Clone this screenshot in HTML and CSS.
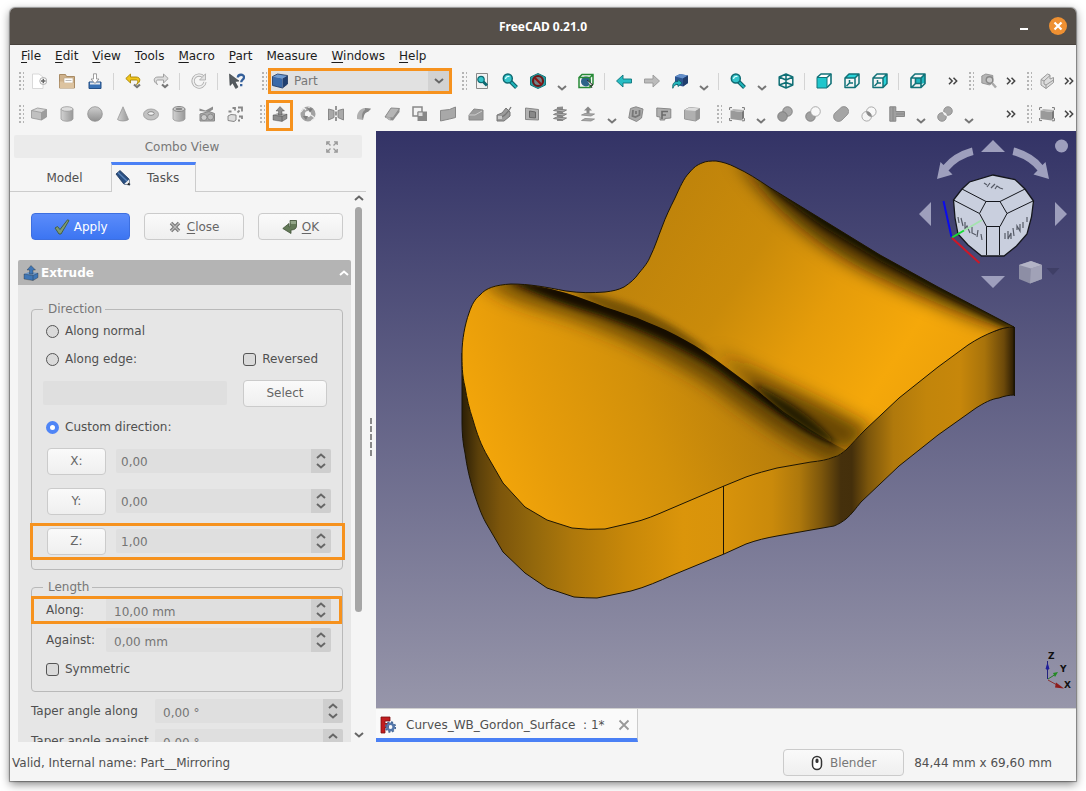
FILE: index.html
```html
<!DOCTYPE html>
<html lang="en">
<head>
    <meta charset="UTF-8">
    <meta name="viewport" content="width=device-width, initial-scale=1.0">
    <title>FreeCAD 0.21.0</title>
    <link rel="stylesheet" href="styles.css">
</head>
<body>
    <!-- shared icon shapes -->
    <svg class="defs" width="0" height="0" aria-hidden="true">
        <defs>
            <linearGradient id="g" x1="0" y1="0" x2="0" y2="1">
                <stop offset="0" stop-color="#cfcfcf"/><stop offset="1" stop-color="#8f8f8f"/>
            </linearGradient>
            <linearGradient id="gh" x1="0" y1="0" x2="1" y2="0">
                <stop offset="0" stop-color="#d2d2d2"/><stop offset="1" stop-color="#989898"/>
            </linearGradient>
        </defs>
        <symbol id="chev" viewBox="0 0 10 6"><path d="M1 1l4 3.400L9 1" fill="none" stroke="currentColor" stroke-width="2"/></symbol>
        <symbol id="ext" viewBox="0 0 10 8"><path d="M1 .7L4.200 4 1 7.300M5.500.7L8.700 4 5.500 7.300" fill="none" stroke="#444" stroke-width="1.500"/></symbol>
        <symbol id="mag" viewBox="0 0 16 16">
            <path d="M8.500 8.500l6 6" stroke="#0c6068" stroke-width="4"/><path d="M8.500 8.500l5.700 5.700" stroke="#21b5bb" stroke-width="2"/>
            <circle cx="5.800" cy="5.500" r="4.500" fill="#35c4ca" stroke="#0e6a72" stroke-width="1.500"/><path d="M3.500 6a3 3 0 0 1 4-2.500" stroke="#d8ffff" fill="none" stroke-width="1.300"/>
        </symbol>
        <symbol id="wire" viewBox="0 0 16 16">
            <path d="M1.200 4L8 1l6.800 3v8L8 15l-6.800-3zM1.200 4L8 7l6.800-3M8 7v8M8 1v6M1.200 12L8 9.500l6.800 2.500" fill="none" stroke="#0f6f75" stroke-width="1.500" stroke-linejoin="round"/>
        </symbol>
        <symbol id="box" viewBox="0 0 16 16">
            <path d="M.5 4.500l6-2.500 9 1.500-5 3z" fill="#d6d6d6"/><path d="M.5 4.500l10 2V14l-10-2z" fill="#c0c0c0"/><path d="M10.500 6.500l5-3V11l-5 3z" fill="#9d9d9d"/>
            <path d="M.5 4.500l6-2.500 9 1.500V11l-5 3-10-2zM.5 4.500l10 2V14M10.500 6.500l5-3" fill="none" stroke="#949494" stroke-width=".8"/>
        </symbol>
        <symbol id="bluebox" viewBox="0 0 16 16">
            <path d="M.5 3.500l5-2.500 10 1.500-5 3z" fill="#6d9bd3"/><path d="M.5 3.500l10 2V15L.5 12.500z" fill="#3a69a8"/><path d="M10.500 5.500l5-3V11l-5 4z" fill="#203f70"/>
            <path d="M.5 3.500l5-2.500 10 1.500V11l-5 4-10-2.500z" fill="none" stroke="#1c3560" stroke-width=".8"/>
        </symbol>
        <symbol id="frame" viewBox="0 0 16 16">
            <path d="M1.500 4.500l11 1.500v8.500L1.500 13z" fill="#9a9a9a"/><path d="M12.500 6L15 4v8l-2.500 2.500z" fill="#777"/><path d="M1.500 4.500L4.500 3l10.500 1-2.500 2z" fill="#b5b5b5"/>
            <path d="M.6 4V1.600H3M13 1.600h2.400V4M.6 12v2.600H3M13 14.800h2.400v-2.600" fill="none" stroke="#777"/>
        </symbol>
        <symbol id="extrude" viewBox="0 0 16 16">
            <path d="M1 9l5-2 9 1v4.500L10 15.500 1 14z" fill="currentColor"/><path d="M1 9l5-2 9 1-5 2.500z" fill="#fff" fill-opacity=".25"/>
            <path d="M1 9l9 1.500L15 8M10 10.500v5M1 9v5l9 1.500 5-3V8" fill="none" stroke="#222" stroke-opacity=".4" stroke-width=".8"/>
            <path d="M8 .5L12.500 5H10v4H6.500V5H4z" fill="currentColor" stroke="#222" stroke-opacity=".45" stroke-width=".7"/>
        </symbol>
    </svg>

    <div class="window">
        <header class="titlebar">
            <h1 class="title">FreeCAD 0.21.0</h1>
            <div class="window-buttons">
                <button class="minimize" aria-label="Minimize"></button>
                <button class="close-window" aria-label="Close window">
                    <svg width="10" height="10" viewBox="0 0 10 10"><path d="M1.500 1.500l7 7M8.500 1.500l-7 7" stroke="#fff" stroke-width="2.200"/></svg>
                </button>
            </div>
        </header>

        <nav class="menubar">
            <button><u>F</u>ile</button>
            <button><u>E</u>dit</button>
            <button><u>V</u>iew</button>
            <button><u>T</u>ools</button>
            <button><u>M</u>acro</button>
            <button><u>P</u>art</button>
            <button>Measure</button>
            <button><u>W</u>indows</button>
            <button><u>H</u>elp</button>
        </nav>

        <div class="toolbar-row">
            <div class="toolbar">
                <span class="grip"></span>
                <button class="tool" aria-label="New"><svg viewBox="0 0 16 16"><path d="M1.500 1H8l4 3v11.500H1.500z" fill="#fff" stroke="#d0d0d0" stroke-width=".8"/><circle cx="12.300" cy="8" r="3.500" fill="#fff" stroke="#999" stroke-width=".8"/><path d="M12.300 5.700v4.600M10 8h4.600" stroke="#666" stroke-width="1.500"/></svg></button>
                <button class="tool" aria-label="Open"><svg viewBox="0 0 16 16"><path d="M.5 1.500h6l1 2h8v11.500H.5z" fill="#cfb28c" stroke="#a98b64"/><path d="M5 5h9v5H5z" fill="#fff" stroke="#bba27f" stroke-width=".6"/><path d="M6.500 7.500h6" stroke="#bbb"/><path d="M.8 8.500h3.700V10H15v5H.8z" fill="#dcc3a0"/></svg></button>
                <button class="tool" aria-label="Save"><svg viewBox="0 0 16 16"><path d="M2 9h12v6.500H2z" fill="#3972b5" stroke="#244f85"/><path d="M3 9.500h10v2H3z" fill="#e4e9ef"/><path d="M6.500.8h3V6H12l-4 4.500L4 6h2.500z" fill="#fff" stroke="#888" stroke-width=".8"/></svg></button>
                <span class="sep"></span>
                <button class="tool" aria-label="Undo"><svg viewBox="0 0 16 16"><path d="M5.500 1L.8 5.500 5.500 10V7H11c2 0 2.500 2 .5 4.500C16 9 16 4 11 4H5.500z" fill="#f1c51b" stroke="#a58205" stroke-width=".9"/><path d="M9 11.500l3 2.500 3-2.500" fill="none" stroke="#777" stroke-width="2.200"/></svg></button>
                <button class="tool" aria-label="Redo"><svg viewBox="0 0 16 16"><path d="M10.500 1l4.700 4.500-4.700 4.500V7H5C3 7 2.500 9 4.500 11.500 0 9 0 4 5 4h5.500z" fill="#ddd" stroke="#999" stroke-width=".9"/><path d="M9 11.500l3 2.500 3-2.500" fill="none" stroke="#777" stroke-width="2.200"/></svg></button>
                <span class="sep"></span>
                <button class="tool" aria-label="Refresh"><svg viewBox="0 0 16 16"><path d="M12.500 4A6 6 0 1 0 14 9" fill="none" stroke="#aaa" stroke-width="3.200"/><path d="M12.500 4A6 6 0 1 0 14 9" fill="none" stroke="#eee" stroke-width="1.600"/><path d="M14.500.8V7H8.500z" fill="#e2e2e2" stroke="#aaa" stroke-width=".8"/></svg></button>
                <span class="sep"></span>
                <button class="tool" aria-label="What's this?"><svg viewBox="0 0 16 16"><path d="M.5 1l9.500 7-4 .6 3 5.500-2.300 1.400-3-5.500L1 12.500z" fill="#555b60" stroke="#3b3f42" stroke-width=".6"/><path d="M8.800 4.500C9 1 15 .8 15 4.200c0 2.500-2.800 2.300-2.800 5M12.200 11v2.300" fill="none" stroke="#35609b" stroke-width="2.300"/></svg></button>
            </div>
            <div class="toolbar">
                <span class="grip"></span>
                <div class="workbench">
                    <svg class="workbench-icon" viewBox="0 0 16 16"><use href="#bluebox"/></svg>
                    <select aria-label="Workbench"><option>Part</option></select>
                    <span class="workbench-arrow"><svg width="10" height="6"><use href="#chev"/></svg></span>
                </div>
            </div>
            <div class="toolbar wide">
                <span class="grip"></span>
                <button class="tool" aria-label="Fit all"><svg viewBox="0 0 16 16"><path d="M2.500.5h11v15h-11z" fill="#f2f2f2" stroke="#888"/><path d="M8.500 8l4.500 4.500" stroke="#0e6a72" stroke-width="3"/><circle cx="7" cy="6.500" r="3.200" fill="#35c4ca" stroke="#0e6a72" stroke-width="1.200"/></svg></button>
                <button class="tool" aria-label="Fit selection"><svg viewBox="0 0 16 16"><use href="#mag"/></svg></button>
                <button class="tool" aria-label="Draw style"><svg viewBox="0 0 16 16"><path d="M.5 4L8 .5 15.500 4v8L8 15.500.5 12z" fill="#2a9ba0" stroke="#14777c"/><circle cx="8" cy="8" r="5" fill="#708488" stroke="#6e1717" stroke-width="2.200"/><path d="M4.500 4.500l7 7" stroke="#8c1717" stroke-width="2.200"/></svg></button>
                <button class="drop" aria-label="More styles"><svg width="10" height="6"><use href="#chev"/></svg></button>
                <button class="tool" aria-label="Bounding box"><svg viewBox="0 0 16 16"><circle cx="8" cy="8.500" r="5" fill="#2d6389"/><path d="M1 4.500l3-3h11v9.500l-3 3.500H1zM1 4.500h11v10M12 4.500l3-3" fill="none" stroke="#278a37" stroke-width="1.500"/><path d="M9 7l6 5-2.500.3 1.500 2.700" fill="#eee" stroke="#222" stroke-width=".9"/></svg></button>
                <span class="sep"></span>
                <button class="tool" aria-label="Back"><svg viewBox="0 0 16 16"><path d="M7 2v4h8.500v4H7v4L.5 8z" fill="#27bdc4" stroke="#0e757b" stroke-width=".9"/></svg></button>
                <button class="tool" aria-label="Forward"><svg viewBox="0 0 16 16"><path d="M9 2v4H.5v4H9v4l6.500-6z" fill="#bbb" stroke="#999" stroke-width=".9"/></svg></button>
                <button class="tool" aria-label="Linked object"><svg viewBox="0 0 16 16"><path d="M3 3.500L8 1l8 1.500V10l-5 3.500-8-2z" fill="#2c5490"/><path d="M3 3.500L8 1l8 1.500-5 3z" fill="#638fca"/><path d="M11 5.500l5-3V10l-5 3.500z" fill="#203e6d"/><path d="M.8 15.300C0 10 3 8 6 8.500V6.500L10 10l-4 3.500v-2c-2.500-.5-4 1-5.200 3.800z" fill="#24b5bc" stroke="#0d5e65" stroke-width=".8"/></svg></button>
                <button class="drop" aria-label="More links"><svg width="10" height="6"><use href="#chev"/></svg></button>
                <span class="sep"></span>
                <button class="tool" aria-label="Zoom"><svg viewBox="0 0 16 16"><use href="#mag"/></svg></button>
                <button class="drop" aria-label="More zoom"><svg width="10" height="6"><use href="#chev"/></svg></button>
                <button class="tool" aria-label="Isometric"><svg viewBox="0 0 16 16"><use href="#wire"/></svg></button>
                <span class="sep"></span>
                <button class="tool" aria-label="Front"><svg viewBox="0 0 16 16"><path d="M1 4.500L5 1h10v9.500l-4 4" fill="#fff" stroke="#127278" stroke-width="1.600" stroke-linejoin="round"/><path d="M1 4.500h10v10.500H1z" fill="#20c6cc" stroke="#127278" stroke-linejoin="round"/><path d="M11 4.500L15 1" stroke="#127278" stroke-width="1.600"/></svg></button>
                <button class="tool" aria-label="Top"><svg viewBox="0 0 16 16"><path d="M1 5l4-4h10l-4 4z" fill="#29d3d9"/><path d="M1 5l4-4h10v9.500l-4 4H1zM1 5h10v9.500M11 5l4-4M5.500 7v3l-3 3M6 10h3" fill="none" stroke="#127278" stroke-width="1.500" stroke-linejoin="round"/></svg></button>
                <button class="tool" aria-label="Right"><svg viewBox="0 0 16 16"><path d="M11 5l4-4v9.500l-4 4z" fill="#29d3d9"/><path d="M1 5l4-4h10v9.500l-4 4H1zM1 5h10v9.500M11 5l4-4M5.500 7v3l-3 3M6 10h3" fill="none" stroke="#127278" stroke-width="1.500" stroke-linejoin="round"/></svg></button>
                <span class="sep"></span>
                <button class="tool" aria-label="Rear"><svg viewBox="0 0 16 16"><path d="M5 5h6v6H5zM11 5l4-4v9l-4 1z" fill="#1fb6bd"/><path d="M1 5l4-4h10v9.500l-4 4H1zM1 5h10v9.500M11 5l4-4M5.500 5v5.500l-4 4M5.500 10.500H11" fill="none" stroke="#127278" stroke-width="1.600" stroke-linejoin="round"/></svg></button>
                <button class="ext last" aria-label="More"><svg width="10" height="8"><use href="#ext"/></svg></button>
            </div>
            <div class="toolbar">
                <span class="grip"></span>
                <button class="tool" aria-label="Measure"><svg viewBox="0 0 16 16"><path d="M.8 3l4-2 7 1.500V9l-3 3-8-2z" fill="#b5b5b5" stroke="#888" stroke-width=".8"/><circle cx="8.500" cy="7" r="3.300" fill="#ccc" stroke="#888" stroke-width="1.400"/><path d="M11 10l4 4.500" stroke="#aaa" stroke-width="2.500"/></svg></button>
                <button class="ext" aria-label="More"><svg width="10" height="8"><use href="#ext"/></svg></button>
            </div>
            <div class="toolbar">
                <span class="grip"></span>
                <button class="tool" aria-label="Part design"><svg viewBox="0 0 16 16"><path d="M2 6.500L8.500 1 11 2v4l3.500-1.500v5L7 15.500 2 12z" fill="#ddd" stroke="#999"/><path d="M2 6.500L5 8v3l2 1v3.500M5 8l6-5.500M7 12l7.500-5" fill="none" stroke="#999"/></svg></button>
                <button class="ext" aria-label="More"><svg width="10" height="8"><use href="#ext"/></svg></button>
            </div>
        </div>

        <div class="toolbar-row second">
            <div class="toolbar">
                <span class="grip"></span>
                <button class="tool" aria-label="Box"><svg viewBox="0 0 16 16"><use href="#box"/></svg></button>
                <button class="tool" aria-label="Cylinder"><svg viewBox="0 0 16 16"><path d="M2 3v10c1.500 3 10.500 3 12 0V3z" fill="url(#gh)" stroke="#999" stroke-width=".8"/><ellipse cx="8" cy="3" rx="6" ry="2.300" fill="#ddd" stroke="#999" stroke-width=".8"/></svg></button>
                <button class="tool" aria-label="Sphere"><svg viewBox="0 0 16 16"><circle cx="8" cy="8" r="7.300" fill="url(#g)" stroke="#909090" stroke-width=".8"/></svg></button>
                <button class="tool" aria-label="Cone"><svg viewBox="0 0 16 16"><path d="M8 .8L2.500 13.500c2 2 9 2 11 0z" fill="url(#gh)" stroke="#999" stroke-width=".8"/></svg></button>
                <button class="tool" aria-label="Torus"><svg viewBox="0 0 16 16"><ellipse cx="8" cy="8.500" rx="7.500" ry="5.500" fill="#c2c2c2" stroke="#999" stroke-width=".8"/><ellipse cx="8" cy="7.500" rx="3.200" ry="1.800" fill="#f1f1f1" stroke="#888"/></svg></button>
                <button class="tool" aria-label="Tube"><svg viewBox="0 0 16 16"><path d="M2 3v10c1.500 3 10.500 3 12 0V3z" fill="url(#gh)" stroke="#999" stroke-width=".8"/><ellipse cx="8" cy="3" rx="6" ry="2.500" fill="#ccc" stroke="#888"/><ellipse cx="8" cy="3" rx="3.300" ry="1.200" fill="#888"/></svg></button>
                <button class="tool" aria-label="Primitives"><svg viewBox="0 0 16 16"><path d="M1 8l9-2.500 5.500 2v7.500H1z" fill="#aaa" stroke="#888"/><path d="M.5 2.500l6 2L14 .5v3L10 6 .5 5z" fill="#8d8d8d"/><circle cx="5" cy="11.500" r="3" fill="#ccc" stroke="#888"/><circle cx="11.500" cy="11" r="3" fill="#bbb" stroke="#888"/></svg></button>
                <button class="tool" aria-label="Shape builder"><svg viewBox="0 0 16 16"><path d="M1 10l3-1.500 5 .5v5l-2 1.500-6-1z" fill="#ddd" stroke="#888"/><path d="M11 1.500h4v4M10.500 6.500l2-2M5.500 2h2.500v2.500M1.500 5.500h3M12 10.500h3v2.500M11 14.500h2" fill="none" stroke="#888" stroke-width="1.800"/></svg></button>
            </div>
            <div class="toolbar">
                <span class="grip"></span>
                <button class="tool marked" aria-label="Extrude"><svg viewBox="0 0 16 16" color="#8c8c8c"><use href="#extrude"/></svg></button>
                <button class="tool" aria-label="Revolve"><svg viewBox="0 0 16 16"><circle cx="8" cy="8" r="5.300" fill="none" stroke="#a2a2a2" stroke-width="4.500"/><path d="M1 6l3-4 2 2M9 1v5M11 9l4 3-4 3" stroke="#eee" stroke-width="1.200" fill="none"/><path d="M7 2l6 .5-3 4zM3 10h5l-2 4z" fill="#7d7d7d"/></svg></button>
                <button class="tool" aria-label="Mirror"><svg viewBox="0 0 16 16"><path d="M.5 3L6 4.500v7L.5 14zM15.500 3L10 4.500v7l5.500 2.500z" fill="#a9a9a9" stroke="#888"/><path d="M8 0v16" stroke="#777" stroke-width="1.500" stroke-dasharray="4 1.500"/></svg></button>
                <button class="tool" aria-label="Fillet"><svg viewBox="0 0 16 16"><path d="M1 10C2 5 5 2.500 9 2l6 .8-3 3C9 6.500 7.500 8 7 14l-6-1z" fill="#b0b0b0"/><path d="M9 2l6 .8-3 3C9.500 6.300 8 8 7 14l-1-3C6 7 7 5 9 4z" fill="#888"/></svg></button>
                <button class="tool" aria-label="Chamfer"><svg viewBox="0 0 16 16"><path d="M1 11l6-9 8.500.5L9 12z" fill="#b5b5b5" stroke="#8a8a8a"/><path d="M1 11l8 1 6.500-9.500V6L9 14.500l-4-.5z" fill="#8d8d8d"/><path d="M1.500 11l5 .5V15z" fill="#b5b5b5"/></svg></button>
                <button class="tool" aria-label="Make face"><svg viewBox="0 0 16 16"><path d="M1 1h9v9H1z" fill="#f3f3f3" stroke="#888" stroke-width="1.500"/><path d="M5.500 5.500H15V15H5.500z" fill="#888"/><path d="M6 6h5v4.500H6z" fill="#ddd" stroke="#888"/></svg></button>
                <button class="tool" aria-label="Ruled surface"><svg viewBox="0 0 16 16"><path d="M.5 4.500l9-1 6-2.500v10.500l-6 1.500-9 2z" fill="#a8a8a8" stroke="#888"/></svg></button>
                <button class="tool" aria-label="Loft"><svg viewBox="0 0 16 16"><path d="M1 9l5-6 9 1v10H1z" fill="#9b9b9b" stroke="#888"/><path d="M1 9h6l7-4" fill="none" stroke="#ccc"/></svg></button>
                <button class="tool" aria-label="Sweep"><svg viewBox="0 0 16 16"><path d="M1 9l5-2 4-5 4 4v4l-6 5H1z" fill="#9b9b9b" stroke="#777"/><path d="M4 11c4 0 7-3 11-10" fill="none" stroke="#777" stroke-width="1.300"/><path d="M2 10h4v3H2z" fill="#ccc"/></svg></button>
                <button class="tool" aria-label="Section"><svg viewBox="0 0 16 16"><path d="M1.500 2l13 1.500V14l-13-.5z" fill="#b2b2b2" stroke="#888"/><path d="M5.500 5l6 1v6l-6-.5z" fill="#888" stroke="#666"/></svg></button>
                <button class="tool" aria-label="Cross sections"><svg viewBox="0 0 16 16"><path d="M5 1l6-.5V15H5z" fill="#8d8d8d"/><path d="M1.500 4.500L5 3l9.500 1-3.500 2zM1.500 8.500L5 7l9.500 1-3.500 2zM1.500 12.500L5 11l9.500 1-3.500 2z" fill="#b0b0b0" stroke="#777" stroke-width=".9"/></svg></button>
                <button class="tool" aria-label="Offset"><svg viewBox="0 0 16 16"><path d="M8 .5l4 4H9.500v3h-3v-3H4z" fill="#888"/><path d="M1.500 9L5 7.500l9.500.5-3.500 2zM1.500 14.500L5 12.500l9.500.5-3.500 2z" fill="#aaa" stroke="#888" stroke-width=".8"/></svg></button>
                <button class="drop" aria-label="More offsets"><svg width="10" height="6"><use href="#chev"/></svg></button>
                <button class="tool" aria-label="Thickness"><svg viewBox="0 0 16 16"><path d="M2.500 2.500L8 .8l7 2.200-1.500 9-5 3.500L.8 12z" fill="#a9a9a9" stroke="#888"/><path d="M5 4l-.5 6 3 1 4-2V4M8 5v3" fill="none" stroke="#777" stroke-width="1.800"/></svg></button>
                <button class="tool" aria-label="Projection"><svg viewBox="0 0 16 16"><path d="M.8 2l14 1v9l-6 .5V14H4v-3L.8 10.500z" fill="#b0b0b0" stroke="#888"/><path d="M6 13V5.500h6M6 9h4" fill="none" stroke="#6c6c6c" stroke-width="1.600"/></svg></button>
                <button class="tool" aria-label="Color per face"><svg viewBox="0 0 16 16"><path d="M.5 4l5-2.500 10 1v10l-4 2.500-11-2z" fill="#b0b0b0" stroke="#999"/><path d="M.5 4l5-2.500 10 1-4 2.500z" fill="#ddd"/><path d="M11.500 5l4-2.500v10l-4 2.500z" fill="#959595"/></svg></button>
            </div>
            <div class="toolbar wide">
                <span class="grip"></span>
                <button class="tool" aria-label="Compound"><svg viewBox="0 0 16 16"><use href="#frame"/></svg></button>
                <button class="drop" aria-label="More compounds"><svg width="10" height="6"><use href="#chev"/></svg></button>
                <button class="tool" aria-label="Boolean"><svg viewBox="0 0 16 16"><circle cx="10.500" cy="5.500" r="4.800" fill="#a8a8a8" stroke="#777" stroke-width=".8"/><circle cx="5.500" cy="10.500" r="4.800" fill="#999" stroke="#777" stroke-width=".8"/></svg></button>
                <button class="tool" aria-label="Cut"><svg viewBox="0 0 16 16"><circle cx="5.500" cy="10.500" r="4.800" fill="#a0a0a0" stroke="#777" stroke-width=".8"/><circle cx="10.500" cy="5.500" r="4.800" fill="#f8f8f8" stroke="#999" stroke-width=".8"/></svg></button>
                <button class="tool" aria-label="Union"><svg viewBox="0 0 16 16"><path d="M7 2.500a4.800 4.800 0 1 1 7 6.500l-5 5a4.800 4.800 0 1 1-7-7z" fill="#a5a5a5" stroke="#888" stroke-width=".8"/></svg></button>
                <button class="tool" aria-label="Intersection"><svg viewBox="0 0 16 16"><circle cx="10.300" cy="5.700" r="4.800" fill="#f8f8f8" stroke="#999" stroke-width=".8"/><circle cx="5.700" cy="10.300" r="4.800" fill="none" stroke="#999" stroke-width=".8"/><path d="M5.600 5.600a4.800 4.800 0 0 1 4.800 4.800 4.800 4.800 0 0 1-4.800-4.800z" fill="#888"/></svg></button>
                <button class="tool" aria-label="Join"><svg viewBox="0 0 16 16"><path d="M.8.8h6v4.700h8.700v5H6.800v4.700h-6z" fill="#a0a0a0" stroke="#888"/><path d="M4 1v14M7 8h8" stroke="#888"/></svg></button>
                <button class="drop" aria-label="More joins"><svg width="10" height="6"><use href="#chev"/></svg></button>
                <button class="tool" aria-label="Split"><svg viewBox="0 0 16 16"><circle cx="11" cy="5" r="4.300" fill="#a8a8a8" stroke="#888" stroke-width=".8"/><circle cx="5" cy="11" r="4.300" fill="#a8a8a8" stroke="#888" stroke-width=".8"/><path d="M6 6.500a4 4 0 0 1 3.500 3.500M6.500 6a4 4 0 0 0 3.500 3.500" fill="none" stroke="#f3f3f3" stroke-width="1.200"/></svg></button>
                <button class="drop" aria-label="More splits"><svg width="10" height="6"><use href="#chev"/></svg></button>
                <button class="ext last" aria-label="More"><svg width="10" height="8"><use href="#ext"/></svg></button>
            </div>
            <div class="toolbar">
                <span class="grip"></span>
                <button class="tool" aria-label="Check geometry"><svg viewBox="0 0 16 16"><use href="#frame"/></svg></button>
                <button class="ext" aria-label="More"><svg width="10" height="8"><use href="#ext"/></svg></button>
            </div>
        </div>

        <main class="main">
            <aside class="dock">
                <div class="dock-title">
                    <span>Combo View</span>
                    <button class="dock-float" aria-label="Float panel">
                        <svg width="12" height="12" viewBox="0 0 12 12"><path d="M.8 4V.8H4M.8.8l3.700 3.700M8 .8h3.200V4M11.200.8L7.500 4.500M.8 8v3.200H4M.8 11.200l3.700-3.700M8 11.200h3.200V8M11.200 11.200L7.500 7.500" fill="none" stroke="#999" stroke-width="1.300"/></svg>
                    </button>
                </div>
                <div class="tabs">
                    <button class="tab">Model</button>
                    <button class="tab active">
                        <svg width="16" height="16" viewBox="0 0 16 16"><path d="M1 4l4-3.500 9 8.500.8 6-6-1z" fill="#284e80" stroke="#1a3459" stroke-width=".8"/><path d="M3 2.500l9 8.500" stroke="#5a83b8" stroke-width="1.500"/><path d="M14 9.500l.8 5.500-5.500-1z" fill="#eee"/><path d="M14.200 12.500l.8 2.700-3-.6z" fill="#111"/></svg>
                        Tasks
                    </button>
                    <span class="tabs-rest"></span>
                </div>
                <div class="scroll">
                    <div class="tasks">
                        <div class="task-buttons">
                            <button class="btn primary"><svg width="16" height="16" viewBox="0 0 16 16"><path d="M1 9l2.500-1.500 2.500 3L13.500.8l1.500.7L7 15H5z" fill="#7e9a73" stroke="#3f5a35" stroke-width=".9"/></svg>Apply</button>
                            <button class="btn"><svg width="12" height="12" viewBox="0 0 12 12"><path d="M2 2l8 8M10 2l-8 8" stroke="#777" stroke-width="3.500"/><path d="M2 2l8 8M10 2l-8 8" stroke="#bbb" stroke-width="1.300"/></svg><span><u>C</u>lose</span></button>
                            <button class="btn ok"><svg width="16" height="16" viewBox="0 0 16 16"><path d="M8 1.500h6.500V7c0 2.500-2 4-5.500 4v3.500L.8 9.500 7 4.500V8c1 0 1.500-.5 1-6.500z" fill="#647a58" stroke="#3f5136" stroke-width=".8"/><path d="M8.500 2h5.500v3H9z" fill="#93a689"/></svg><span><u>O</u>K</span></button>
                        </div>

                        <section class="panel">
                            <h2 class="panel-title">
                                <svg width="16" height="16" color="#3f76b5"><use href="#extrude"/></svg>
                                Extrude
                                <svg class="fold" width="10" height="6"><use href="#chev"/></svg>
                            </h2>
                            <div class="panel-body">
                                <fieldset>
                                    <legend>Direction</legend>
                                    <div class="row"><label><input type="radio" name="dir">Along normal</label></div>
                                    <div class="row">
                                        <label><input type="radio" name="dir">Along edge:</label>
                                        <label class="reversed"><input type="checkbox">Reversed</label>
                                    </div>
                                    <div class="row tall edge">
                                        <input class="field" type="text" aria-label="Edge" disabled>
                                        <button class="btn">Select</button>
                                    </div>
                                    <div class="row"><label><input type="radio" name="dir" checked>Custom direction:</label></div>
                                    <div class="row tall axis">
                                        <button class="btn">X:</button>
                                        <div class="spin"><input type="text" value="0,00" aria-label="X"><span class="arrows"><button aria-label="X up"><svg width="10" height="6"><use href="#chev"/></svg></button><button aria-label="X down"><svg width="10" height="6"><use href="#chev"/></svg></button></span></div>
                                    </div>
                                    <div class="row tall axis">
                                        <button class="btn">Y:</button>
                                        <div class="spin"><input type="text" value="0,00" aria-label="Y"><span class="arrows"><button aria-label="Y up"><svg width="10" height="6"><use href="#chev"/></svg></button><button aria-label="Y down"><svg width="10" height="6"><use href="#chev"/></svg></button></span></div>
                                    </div>
                                    <div class="row tall axis marked">
                                        <button class="btn">Z:</button>
                                        <div class="spin"><input type="text" value="1,00" aria-label="Z"><span class="arrows"><button aria-label="Z up"><svg width="10" height="6"><use href="#chev"/></svg></button><button aria-label="Z down"><svg width="10" height="6"><use href="#chev"/></svg></button></span></div>
                                    </div>
                                </fieldset>
                                <fieldset class="length">
                                    <legend>Length</legend>
                                    <div class="row mid marked">
                                        <label for="along">Along:</label>
                                        <div class="spin"><input type="text" id="along" value="10,00 mm"><span class="arrows"><button aria-label="Along up"><svg width="10" height="6"><use href="#chev"/></svg></button><button aria-label="Along down"><svg width="10" height="6"><use href="#chev"/></svg></button></span></div>
                                    </div>
                                    <div class="row mid">
                                        <label for="against">Against:</label>
                                        <div class="spin"><input type="text" id="against" value="0,00 mm"><span class="arrows"><button aria-label="Against up"><svg width="10" height="6"><use href="#chev"/></svg></button><button aria-label="Against down"><svg width="10" height="6"><use href="#chev"/></svg></button></span></div>
                                    </div>
                                    <div class="row"><label><input type="checkbox">Symmetric</label></div>
                                </fieldset>
                                <div class="taper">
                                    <label for="taper1">Taper angle along</label>
                                    <div class="spin"><input type="text" id="taper1" value="0,00 °"><span class="arrows"><button aria-label="Taper along up"><svg width="10" height="6"><use href="#chev"/></svg></button><button aria-label="Taper along down"><svg width="10" height="6"><use href="#chev"/></svg></button></span></div>
                                </div>
                                <div class="taper">
                                    <label for="taper2">Taper angle against</label>
                                    <div class="spin"><input type="text" id="taper2" value="0,00 °"><span class="arrows"><button aria-label="Taper against up"><svg width="10" height="6"><use href="#chev"/></svg></button><button aria-label="Taper against down"><svg width="10" height="6"><use href="#chev"/></svg></button></span></div>
                                </div>
                            </div>
                        </section>
                    </div>
                    <div class="scrollbar">
                        <svg class="up" width="10" height="6"><use href="#chev"/></svg>
                        <div class="track"><div class="thumb"></div></div>
                        <svg width="10" height="6"><use href="#chev"/></svg>
                    </div>
                </div>
            </aside>
            <div class="splitter"><span></span></div>

            <section class="view">
                <div class="canvas">
                    <svg class="model" viewBox="376 131 700 577" preserveAspectRatio="xMidYMid slice">
                        <defs>
                            <linearGradient id="side" gradientUnits="userSpaceOnUse" x1="462" y1="0" x2="1015" y2="0">
                                <stop offset="0" stop-color="#2c1f06"/><stop offset=".03" stop-color="#5b400a"/>
                                <stop offset=".07" stop-color="#7d560b"/><stop offset=".13" stop-color="#93680c"/>
                                <stop offset=".2" stop-color="#ae780b"/><stop offset=".3" stop-color="#c88809"/>
                                <stop offset=".4" stop-color="#db950a"/><stop offset=".47" stop-color="#d8930b"/>
                                <stop offset=".56" stop-color="#ca8a0b"/><stop offset=".61" stop-color="#ae780c"/>
                                <stop offset=".65" stop-color="#7c560c"/><stop offset=".685" stop-color="#45300c"/>
                                <stop offset=".705" stop-color="#442f0b"/><stop offset=".735" stop-color="#7c560c"/>
                                <stop offset=".78" stop-color="#b0790c"/><stop offset=".84" stop-color="#c2850b"/>
                                <stop offset=".9" stop-color="#c7870b"/><stop offset=".945" stop-color="#a8730b"/>
                                <stop offset=".98" stop-color="#6c490a"/><stop offset="1" stop-color="#241804"/>
                            </linearGradient>
                            <linearGradient id="back" gradientUnits="userSpaceOnUse" x1="640" y1="210" x2="930" y2="400">
                                <stop offset="0" stop-color="#bd820b"/><stop offset=".35" stop-color="#ca8b0a"/>
                                <stop offset=".6" stop-color="#e59c0a"/><stop offset=".85" stop-color="#f5a80a"/><stop offset="1" stop-color="#eea20a"/>
                            </linearGradient>
                            <linearGradient id="lobe" gradientUnits="userSpaceOnUse" x1="462" y1="430" x2="740" y2="330">
                                <stop offset="0" stop-color="#f5a70a"/><stop offset=".25" stop-color="#e69c0a"/>
                                <stop offset=".6" stop-color="#d3910a"/><stop offset="1" stop-color="#b87e0b"/>
                            </linearGradient>
                            <filter id="soft" filterUnits="userSpaceOnUse" x="376" y="131" width="700" height="577"><feGaussianBlur stdDeviation="3"/></filter>
                            <filter id="softer" filterUnits="userSpaceOnUse" x="376" y="131" width="700" height="577"><feGaussianBlur stdDeviation="9"/></filter>
                            <path id="topface" d="M462 353C462 340 465 324 469 313C472 304 475 299 480 295C486 288 495 285 511 284C530 284 545 287 566 291C580 293 592 293 605 292C613 291 618 290 624 287C630 283 635 279 639 273C645 266 648 262 650 257C655 247 658 237 662 227C666 216 670 208 675 198C680 187 684 178 689 173C694 167 697 165 702 163C706 161 711 161 716 161C723 162 729 164 735 167C748 173 757 179 769 187L823 220L880 255L938 287L976 307L1014 327C1008 327 1002 328 995 331C985 335 977 339 968 345L938 367L899 398L865 430C858 437 852 444 846 450C842 453 839 456 834 457C827 460 820 461 811 462L777 468C766 471 757 473 746 477L724 486L670 509C656 515 645 520 631 523L605 529Q588 530 572 528L547 520L525 507L503 483L488 457C481 445 477 434 473 420C469 408 467 399 465 387C462 375 462 364 462 353z"/>
                            <path id="lobeface" d="M462 353C462 340 465 324 469 313C472 304 475 299 480 295C486 288 495 285 511 284C530 284 545 287 566 293C580 297 592 302 605 307C620 312 634 316 647 322C660 327 673 333 685 340C698 347 711 356 723 365L754 388L784 412L811 430L834 444L846 450C842 453 839 456 834 457C827 460 820 461 811 462L777 468C766 471 757 473 746 477L724 486L670 509C656 515 645 520 631 523L605 529Q588 530 572 528L547 520L525 507L503 483L488 457C481 445 477 434 473 420C469 408 467 399 465 387C462 375 462 364 462 353z"/>
                            <clipPath id="topclip"><use href="#topface"/></clipPath>
                            <clipPath id="lobeclip"><use href="#lobeface"/></clipPath>
                        </defs>
                        <path d="M462 353V423C462 433 463 444 465 453C467 468 470 480 474 493C478 505 481 514 486 523L503 552L525 573L547 588L574 597Q586 598 597 598L631 591C646 587 659 581 673 575L724 554L746 544C757 540 766 538 777 536L811 530L834 526C839 524 842 522 846 519C852 514 856 508 861 502L899 466L938 435L976 408C984 403 991 399 999 398C1004 396 1010 395 1014 395V327C1008 327 1002 328 995 331L938 300L700 450z" fill="url(#side)" stroke="#1b1404" stroke-width="1"/>
                        <use href="#topface" fill="url(#back)"/>
                        <g clip-path="url(#topclip)">
                            <path d="M735 155L880 235L1030 318L1014 332C960 314 910 292 865 270C810 240 770 205 735 155z" fill="#1c1303" fill-opacity=".8" filter="url(#softer)"/>
                            <path d="M745 160L880 240L1025 322L1010 328L938 292L880 261L823 227L775 192z" fill="#0f0a02" fill-opacity=".9" filter="url(#soft)"/>
                            <path d="M570 290C620 298 660 312 715 355L640 330z" fill="#3a2805" fill-opacity=".55" filter="url(#soft)"/>
                            <path d="M715 352C765 378 820 400 872 430L846 456L784 420z" fill="#2a1c03" fill-opacity=".7" filter="url(#softer)"/>
                        </g>
                        <use href="#lobeface" fill="url(#lobe)"/>
                        <g clip-path="url(#lobeclip)">
                            <path d="M480 278C540 270 600 290 647 310L723 352L790 402L856 450L835 464C800 450 750 415 715 388C670 358 610 330 560 314C530 305 500 298 480 278z" fill="#3a2804" fill-opacity=".72" filter="url(#softer)"/>
                            <path d="M505 280L566 286L605 299L647 314L685 332L723 356L784 404L842 446C795 428 750 394 718 370C680 346 640 329 600 315C570 306 535 294 505 280z" fill="#120c02" filter="url(#soft)"/>
                        </g>
                        <path d="M750 382C785 398 818 420 838 445C812 438 780 415 750 382z" fill="#0f0a02" fill-opacity=".8" filter="url(#soft)"/>
                        <use href="#topface" fill="none" stroke="#1b1404" stroke-width="1"/>
                        <path d="M723.500 486V554M1014.500 327V396" stroke="#1b1404"/>
                    </svg>

                    <svg class="navcube" width="162" height="165" viewBox="914 135 162 165">
                        <g fill="#9e9fbd">
                            <path d="M981 152h24l-12-12zM981 276h24l-12 12zM919 214l12-12v24zM1067 214l-12-12v24z"/>
                            <circle cx="1061.500" cy="146" r="6.500"/>
                            <path id="turn" d="M972 147.500Q953 153 943.500 165L940.500 162 937 179l15.500-4.500-4-4Q958 159 973.500 155z"/>
                            <use href="#turn" transform="translate(1986 0) scale(-1 1)"/>
                        </g>
                        <path d="M943.500 201l8 36" stroke="#0b0bee" stroke-width="2"/>
                        <path d="M962 189l7.500-7 23.500-7 22 4.500 10 9.500 8.500 12-2 16-4.500 17-10.500 12-12.500 10h-22.500L968 245l-10-11-3-16-1.500-18z" fill="#c9cfde" stroke="#14161c" stroke-width="1.300"/>
                        <path d="M962 189l24 12.500h14l25-12.500M953.500 207l26 6.500 6.500-12M953.500 200l26 13.500M1033 201l-26 12.500-7-12M979.500 213.500l7 13h13.500l7-13M986.500 226.500V255M999.500 226.500V255" fill="none" stroke="#14161c" stroke-width="0"/>
                        <path d="M962 189l24 12.500h14l25-12.500M953.500 200l26 13.500 6.500-12M1033 201l-26 12.500-7-12M979.500 213.500l7 13h13.500l7-13M986.500 226.500V255M999.500 226.500V255" fill="none" stroke="#14161c"/>
                        <path d="M984 183l3 2M987 187l3-4M991 188l4-4M995 189l2-3 3 2 3 1M958 217l1 6M961 218l2 8M965 222v7l2-3 3 7M972 227v6l4 2M978 230l-1 7M981 234l1 6M1005 233v6M1008 231v8l3-6v6M1013 228l1 8M1017 230v-4l3 5v-7M1023 222v6M1027 217v5" fill="none" stroke="#555a66" stroke-width="1.200"/>
                        <path d="M952 237.500l12-7" stroke="#17dd33" stroke-width="2"/>
                        <path d="M964 230.500L982 220" stroke="#a4e3ae" stroke-width="1.800"/>
                        <path d="M952 238l27.500 25" stroke="#cf1726" stroke-width="2"/>
                        <path d="M1019 265l12-4 11 4v14l-12 4.500-11-4.500z" fill="#8d8ea5"/>
                        <path d="M1019 265l12-4 11 4-11 3.500z" fill="#b3b4c6"/><path d="M1031 268.500l11-3.500v14l-12 4.500z" fill="#a1a2b7"/>
                        <path d="M1046.500 268h13l-6.500 7z" fill="#3f3f66"/>
                    </svg>

                    <svg class="axes" width="30" height="42" viewBox="1045 650 30 42">
                        <path d="M1047.500 679v-18" stroke="#23237e"/><path d="M1046 669l1.500-5 1.500 5z" fill="#20209a" stroke="#20209a"/>
                        <path d="M1048 679l8-5" stroke="#2a7a2a"/><path d="M1053 673l5-1-3 5z" fill="#238a23"/>
                        <path d="M1048 680l9 5" stroke="#8a3030"/><path d="M1056 682.500l8 6-9-1z" fill="#8e1c1c"/>
                        <text x="1048" y="659">Z</text><text x="1060" y="672">Y</text><text x="1064" y="688">X</text>
                    </svg>
                </div>

                <div class="doc-tabs">
                    <div class="doc-tab">
                        <svg width="16" height="18" viewBox="0 0 16 18"><path d="M1 1h9v4H5v2.500h3.500v4H5V17H1z" fill="#c21d20" stroke="#7c1012" stroke-width=".8"/><circle cx="10.500" cy="11" r="3.200" fill="none" stroke="#5578ab" stroke-width="2.600"/><circle cx="10.500" cy="11" r="4.900" fill="none" stroke="#456898" stroke-width="1.600" stroke-dasharray="2 1.850"/></svg>
                        <span>Curves_WB_Gordon_Surface&nbsp; : 1*</span>
                        <button aria-label="Close document"><svg width="12" height="12" viewBox="0 0 12 12"><path d="M1.500 1.500l9 9M10.500 1.500l-9 9" stroke="#999" stroke-width="1.800"/></svg></button>
                    </div>
                </div>
            </section>
        </main>

        <footer class="statusbar">
            <span class="message">Valid, Internal name: Part__Mirroring</span>
            <button class="btn nav-style"><svg width="12" height="16" viewBox="0 0 12 16"><rect x="1.500" y="1.500" width="9" height="13" rx="4.500" fill="#fff" stroke="#333" stroke-width="1.500"/><rect x="4.500" y="3.500" width="3" height="4.500" rx="1.500" fill="#333"/></svg>Blender</button>
            <span>84,44 mm x 69,60 mm</span>
        </footer>
    </div>
</body>
</html>
```
FILE: styles.css
```css
* {
    box-sizing: border-box;
}
body {
    margin: 0;
    padding: 8px 10px 10px;
    height: 100vh;
    background-color: #fff;
    font-family: "DejaVu Sans", sans-serif;
    font-size: 12px;
    color: #505050;
    overflow: hidden;
}
button, input, select {
    font: inherit;
    color: inherit;
    margin: 0;
}
button {
    border: none;
    background: none;
    padding: 0;
    white-space: nowrap;
}
svg {
    display: block;
    flex: none;
}
.defs {
    position: absolute;
}
.window {
    height: 100%;
    display: flex;
    flex-direction: column;
    background-color: #f5f5f5;
    border-radius: 5px 5px 0 0;
    box-shadow: 0 0 1px 1px rgba(0, 0, 0, 0.35), 0 3px 10px rgba(0, 0, 0, 0.5);
}

/* title bar and menus */
.titlebar {
    position: relative;
    height: 37px;
    display: flex;
    align-items: center;
    justify-content: center;
    background-color: #554f49;
    border-radius: 5px 5px 0 0;
    border-bottom: 1px solid #47413c;
}
.title {
    margin: 0;
    font: bold 12px "Noto Sans", sans-serif;
    color: #fff;
}
.window-buttons {
    position: absolute;
    right: 9px;
    display: flex;
    align-items: center;
    gap: 21px;
}
.minimize {
    width: 8px;
    height: 2px;
    margin-top: 6px;
    background-color: #fff;
}
.close-window {
    width: 18px;
    height: 18px;
    display: flex;
    align-items: center;
    justify-content: center;
    border-radius: 50%;
    background-color: #ee9032;
}
.menubar {
    height: 20px;
    display: flex;
    padding: 2px 0 0 4px;
    color: #1c1c1c;
}
.menubar button {
    padding: 0 7px;
}
u {
    text-underline-offset: 2px;
}

/* toolbars */
.toolbar-row {
    height: 32px;
    display: flex;
    gap: 5px;
    padding-left: 5px;
}
.toolbar-row.second {
    height: 34px;
}
.toolbar {
    display: flex;
    align-items: center;
}
.toolbar:nth-child(-n+2) {
    margin-right: 2px;
}
.toolbar-row:not(.second) .toolbar:nth-child(2) {
    margin-right: 1px;
}
.toolbar.wide {
    flex: 1;
}
.grip {
    width: 6px;
    height: 21px;
    margin: 0 1px 0 3px;
    background: radial-gradient(circle, #b5b5b5 1px, transparent 1px) 0 0 / 4px 4px;
}
.tool {
    position: relative;
    width: 28px;
    height: 28px;
    display: flex;
    align-items: center;
    justify-content: center;
}
.tool svg {
    width: 16px;
    height: 16px;
}
.tool.marked::after {
    content: "";
    position: absolute;
    inset: 0 1px -3px 0;
    border: 3px solid #f6921e;
}
.sep {
    width: 1px;
    height: 17px;
    margin: 0 5px 0 4px;
    background-color: #d4d4d4;
}
.drop {
    width: 20px;
    padding: 14px 0 0 5px;
    color: #777;
}
.ext {
    width: 15px;
    padding-left: 3px;
}
.ext.last {
    margin-left: auto;
}
.workbench {
    width: 184px;
    height: 26px;
    display: flex;
    align-items: center;
    border: 3px solid #f6921e;
    background-color: #e1e1e1;
}
.workbench-icon {
    width: 16px;
    margin-left: 1px;
}
.workbench select {
    flex: 1;
    align-self: stretch;
    appearance: none;
    border: none;
    background: none;
    padding: 0 0 0 6px;
    color: #777;
}
.workbench-arrow {
    width: 21px;
    align-self: stretch;
    display: flex;
    align-items: center;
    justify-content: center;
    background-color: #d2d2d2;
    color: #666;
}

/* dock on the left */
.main {
    flex: 1;
    min-height: 0;
    display: flex;
}
.dock {
    width: 356px;
    display: flex;
    flex-direction: column;
}
.dock-title {
    position: relative;
    height: 23px;
    margin: 4px;
    display: flex;
    align-items: center;
    background-color: #ebebeb;
    border-radius: 2px;
    color: #777;
}
.dock-title span {
    flex: 1;
    text-align: center;
    padding-right: 12px;
}
.dock-float {
    position: absolute;
    right: 24px;
}
.tabs {
    height: 30px;
    display: flex;
    flex: none;
}
.tab {
    width: 101px;
    padding: 2px 0 0 8px;
    border-bottom: 1px solid #ccc;
}
.tab.active {
    width: 85px;
    display: flex;
    align-items: center;
    gap: 16px;
    padding: 0 0 2px 3px;
    border: 1px solid #ccc;
    border-top: 3px solid #4a80f5;
    border-bottom: none;
}
.tabs-rest {
    flex: 1;
    border-bottom: 1px solid #ccc;
}
.scroll {
    flex: 1;
    min-height: 0;
    display: flex;
}
.tasks {
    flex: 1;
    min-width: 0;
    overflow: hidden;
    padding-left: 8px;
}
.task-buttons {
    display: grid;
    grid-template-columns: 7fr 7fr 6fr;
    gap: 14px;
    padding: 21px 8px 20px 13px;
}
.btn {
    height: 27px;
    display: flex;
    align-items: center;
    justify-content: center;
    gap: 4px;
    border: 1px solid #cbcbcb;
    border-radius: 4px;
    background: linear-gradient(#fafafa, #efefef);
    color: #666;
}
.task-buttons .btn {
    gap: 6px;
}
.task-buttons .primary, .task-buttons .ok {
    gap: 4px;
}
.btn.primary {
    border-color: #3d6fe0;
    background: linear-gradient(#5b8cfa, #3c75f2);
    color: #fff;
}
.panel-title {
    height: 25px;
    margin: 0;
    padding: 0 2px 0 5px;
    display: flex;
    align-items: center;
    gap: 2px;
    background-color: #b4b4b4;
    border-radius: 2px 2px 0 0;
    color: #fff;
    font-size: 12px;
}
.fold {
    margin-left: auto;
    transform: scaleY(-1);
}
.panel-body {
    padding: 16px 8px 20px 13px;
    background-color: #e6e6e6;
}
fieldset {
    margin: 0 0 9px;
    padding: 0 11px 8px 11px;
    border: 1px solid #b9b9b9;
    border-radius: 4px;
}
legend {
    height: 16px;
    line-height: 16px;
    padding: 0 3px 0 5px;
    color: #777;
}
fieldset.length {
    margin-bottom: 4px;
}
.row {
    height: 28px;
    display: flex;
    align-items: center;
    padding-left: 3px;
}
.row.tall {
    height: 40px;
}
.row.mid, .taper {
    height: 30px;
}
.row label {
    display: flex;
    align-items: center;
    gap: 6px;
}
.reversed {
    margin: 0 10px 0 auto;
    padding-right: 3px;
}
input[type="radio"], input[type="checkbox"] {
    appearance: none;
    width: 13px;
    height: 13px;
    border: 1px solid #555;
    border-radius: 3px;
    background-color: #dadada;
}
input[type="radio"] {
    border-radius: 50%;
}
input[type="radio"]:checked {
    border: 4px solid #4f85f6;
    background-color: #fff;
}
.edge {
    padding: 0 4px 0 0;
    gap: 16px;
}
.field {
    flex: 1;
    min-width: 0;
    height: 24px;
    border: none;
    border-radius: 2px;
    background-color: #dfdfdf;
}
.edge .btn {
    width: 84px;
}
.axis {
    padding-left: 4px;
    gap: 10px;
}
.axis .btn {
    width: 59px;
}
.row.marked {
    position: relative;
}
.row.marked::after {
    content: "";
    position: absolute;
    inset: 2px -14px 1px -13px;
    border: 3px solid #f6921e;
    pointer-events: none;
}
.mid.marked::after {
    inset: 1px -11px 1px -12px;
}
.spin {
    flex: 1;
    min-width: 0;
    height: 24px;
    display: flex;
    border-radius: 2px;
    overflow: hidden;
    background-color: #dfdfdf;
    color: #757575;
}
.spin input {
    flex: 1;
    min-width: 0;
    border: none;
    background: none;
    padding: 1px 0 0 5px;
}
.mid .spin input, .taper .spin input {
    padding: 4px 0 0 8px;
}
.arrows {
    width: 20px;
    display: flex;
    flex-direction: column;
    align-items: center;
    justify-content: center;
    gap: 4px;
    background-color: #cecece;
    color: #666;
}
.arrows button:first-child {
    transform: scaleY(-1);
}
.mid label {
    width: 60px;
}
.taper {
    display: flex;
    align-items: center;
}
.taper label {
    width: 124px;
}
.scrollbar {
    width: 15px;
    display: flex;
    flex-direction: column;
    align-items: center;
    padding: 3px 0 4px;
    color: #666;
}
.scrollbar .up {
    transform: scaleY(-1);
}
.track {
    flex: 1;
    padding: 6px 0;
}
.thumb {
    width: 7px;
    height: 78%;
    border-radius: 4px;
    background-color: #a6a6a6;
}
.splitter {
    width: 10px;
    display: flex;
    align-items: center;
    justify-content: center;
}
.splitter span {
    width: 2px;
    height: 38px;
    background: repeating-linear-gradient(#888 0 6px, transparent 6px 8px);
}

/* 3D view */
.view {
    flex: 1;
    min-width: 0;
    display: flex;
    flex-direction: column;
}
.canvas {
    flex: 1;
    min-height: 0;
    position: relative;
    background: linear-gradient(#333366, #9796aa);
}
.model {
    width: 100%;
    height: 100%;
}
.navcube {
    position: absolute;
    top: 4px;
    right: 0;
}
.axes {
    position: absolute;
    right: 1px;
    bottom: 16px;
    font-size: 9px;
    font-weight: bold;
    fill: #111;
}
.doc-tabs {
    height: 34px;
    display: flex;
    border-top: 1px solid #d0d0d0;
}
.doc-tab {
    display: flex;
    align-items: center;
    padding: 2px 7px 0 4px;
    gap: 10px;
    border-right: 1px solid #ccc;
    border-bottom: 4px solid #4a80f5;
    background-color: #fafafa;
}
.doc-tab button {
    margin-left: 3px;
}
.statusbar {
    height: 39px;
    display: flex;
    align-items: center;
    gap: 10px;
    padding: 2px 24px 0 2px;
}
.message {
    flex: 1;
}
.nav-style {
    width: 121px;
    gap: 7px;
    color: #777;
}
```
